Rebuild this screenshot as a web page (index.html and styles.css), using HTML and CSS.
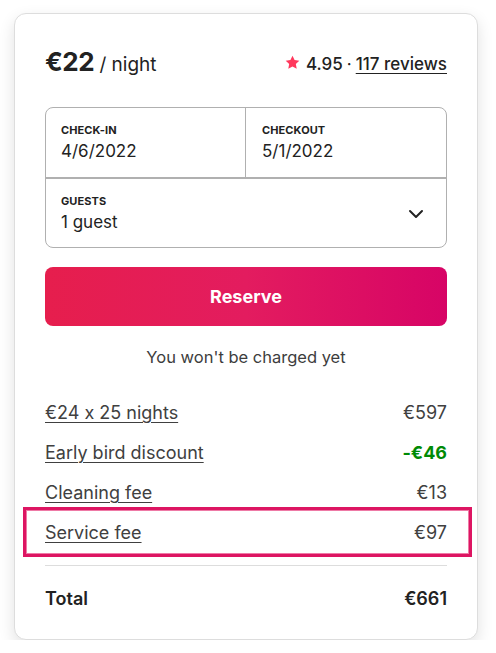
FILE: index.html
```html
<!DOCTYPE html>
<html lang="en">
<head>
<meta charset="utf-8">
<title>Reservation</title>
<link rel="stylesheet" href="styles.css">
</head>
<body>
<div class="card">
  <div class="head">
    <div class="price"><span class="amount">€22</span><span class="per"> / night</span></div>
    <div class="rating">
      <svg class="star" viewBox="0 0 32 32" width="15" height="15" aria-hidden="true"><path d="M16 1.5l4.4 9.3 10.1 1.3-7.4 7 1.9 10.1L16 24.3l-9 4.9 1.9-10.1-7.4-7 10.1-1.3z" fill="#ff385c"/></svg>
      <span class="score">4.95</span><span class="dot">·</span><span class="reviews">117 reviews</span>
    </div>
  </div>
  <div class="picker">
    <div class="dates">
      <div class="cell first">
        <div class="label">CHECK-IN</div>
        <div class="value">4/6/2022</div>
      </div>
      <div class="cell">
        <div class="label">CHECKOUT</div>
        <div class="value">5/1/2022</div>
      </div>
    </div>
    <div class="guests">
      <div>
        <div class="label">GUESTS</div>
        <div class="value">1 guest</div>
      </div>
      <svg class="chev" viewBox="0 0 32 32" width="16" height="16" aria-hidden="true"><path d="M28 12L16 24 4 12" fill="none" stroke="#222" stroke-width="4" stroke-linecap="round" stroke-linejoin="round"/></svg>
    </div>
  </div>
  <button class="reserve">Reserve</button>
  <p class="note">You won't be charged yet</p>
  <div class="rows">
    <div class="row"><span class="link">€24 x 25 nights</span><span>€597</span></div>
    <div class="row"><span class="link">Early bird discount</span><span class="discount">-€46</span></div>
    <div class="row"><span class="link">Cleaning fee</span><span>€13</span></div>
    <div class="row highlight"><span class="link">Service fee</span><span>€97</span></div>
  </div>
  <div class="total"><span>Total</span><span>€661</span></div>
</div>
</body>
</html>
```

FILE: styles.css
```css
* { box-sizing: border-box; }
body {
  margin: 0;
  background: #fff;
  font-family: Inter, "Noto Sans", Arial, sans-serif;
  font-feature-settings: "calt" 0;
  color: #222;
}
.card {
  width: 464px;
  height: 627px;
  margin: 13px 0 0 14px;
  border: 1px solid #dddddd;
  border-radius: 12px;
  box-shadow: 0 6px 16px rgba(0,0,0,0.12);
  padding: 30px 30px 0 30px;
  background: #fff;
}
.head {
  display: flex;
  justify-content: space-between;
  align-items: baseline;
  height: 36px;
  line-height: 36px;
}
.amount { font-size: 26px; font-weight: 700; letter-spacing: -0.5px; }
.per { font-size: 19px; font-weight: 400; }
.rating { display: flex; align-items: center; font-size: 17px; }
.star { margin-right: 6px; position: relative; top: -1px; }
.score { font-weight: 500; }
.dot { margin: 0 4px; }
.reviews { font-weight: 500; text-decoration: underline; text-underline-offset: 3px; }
.picker {
  margin-top: 27px;
  border: 1px solid #b0b0b0;
  border-radius: 8px;
  height: 141px;
  display: flex;
  flex-direction: column;
}
.dates {
  display: flex;
  height: 71px;
  border-bottom: 2px solid #b0b0b0;
}
.cell {
  flex: 1;
  padding: 14px 15px 0 15px;
}
.cell.first { border-right: 1px solid #b0b0b0; }
.cell + .cell { padding-left: 16px; }
.label { font-size: 11px; font-weight: 700; letter-spacing: 0.1px; line-height: 16px; }
.value { font-size: 17px; line-height: 24px; font-weight: 400; margin-top: 1px; color: #222; }
.guests {
  flex: 1;
  display: flex;
  justify-content: space-between;
  align-items: center;
  padding: 0 22px 0 15px;
}
.guests > div { padding-top: 0; }
.reserve {
  display: block;
  width: 100%;
  height: 59px;
  margin-top: 19px;
  border: none;
  border-radius: 8px;
  background: linear-gradient(to right, #E61E4D 0%, #E31C5F 50%, #D70466 100%);
  color: #fff;
  font-family: inherit;
  font-size: 18px;
  font-weight: 700;
}
.note {
  margin: 20px 0 0 0;
  text-align: center;
  font-size: 16.5px;
  line-height: 22px;
  color: #3d3d3d;
}
.rows { margin-top: 24px; }
.row {
  display: flex;
  justify-content: space-between;
  align-items: center;
  height: 40px;
  font-size: 18px;
  color: #404040;
}
.link { text-decoration: underline; text-decoration-thickness: 1px; text-underline-offset: 3px; }
.discount { color: #008a05; font-weight: 700; }
.highlight {
  height: 50px;
  margin: -5px -25px 0 -22px;
  padding: 0 22px 0 19px;
  border: 3px solid #dd1562;
  box-shadow: inset 0 0 0 1px #ee7aa6;
}
.total {
  margin-top: 8px;
  border-top: 1px solid #dddddd;
  display: flex;
  justify-content: space-between;
  align-items: center;
  height: 66px;
  font-size: 18px;
  font-weight: 600;
}
```
